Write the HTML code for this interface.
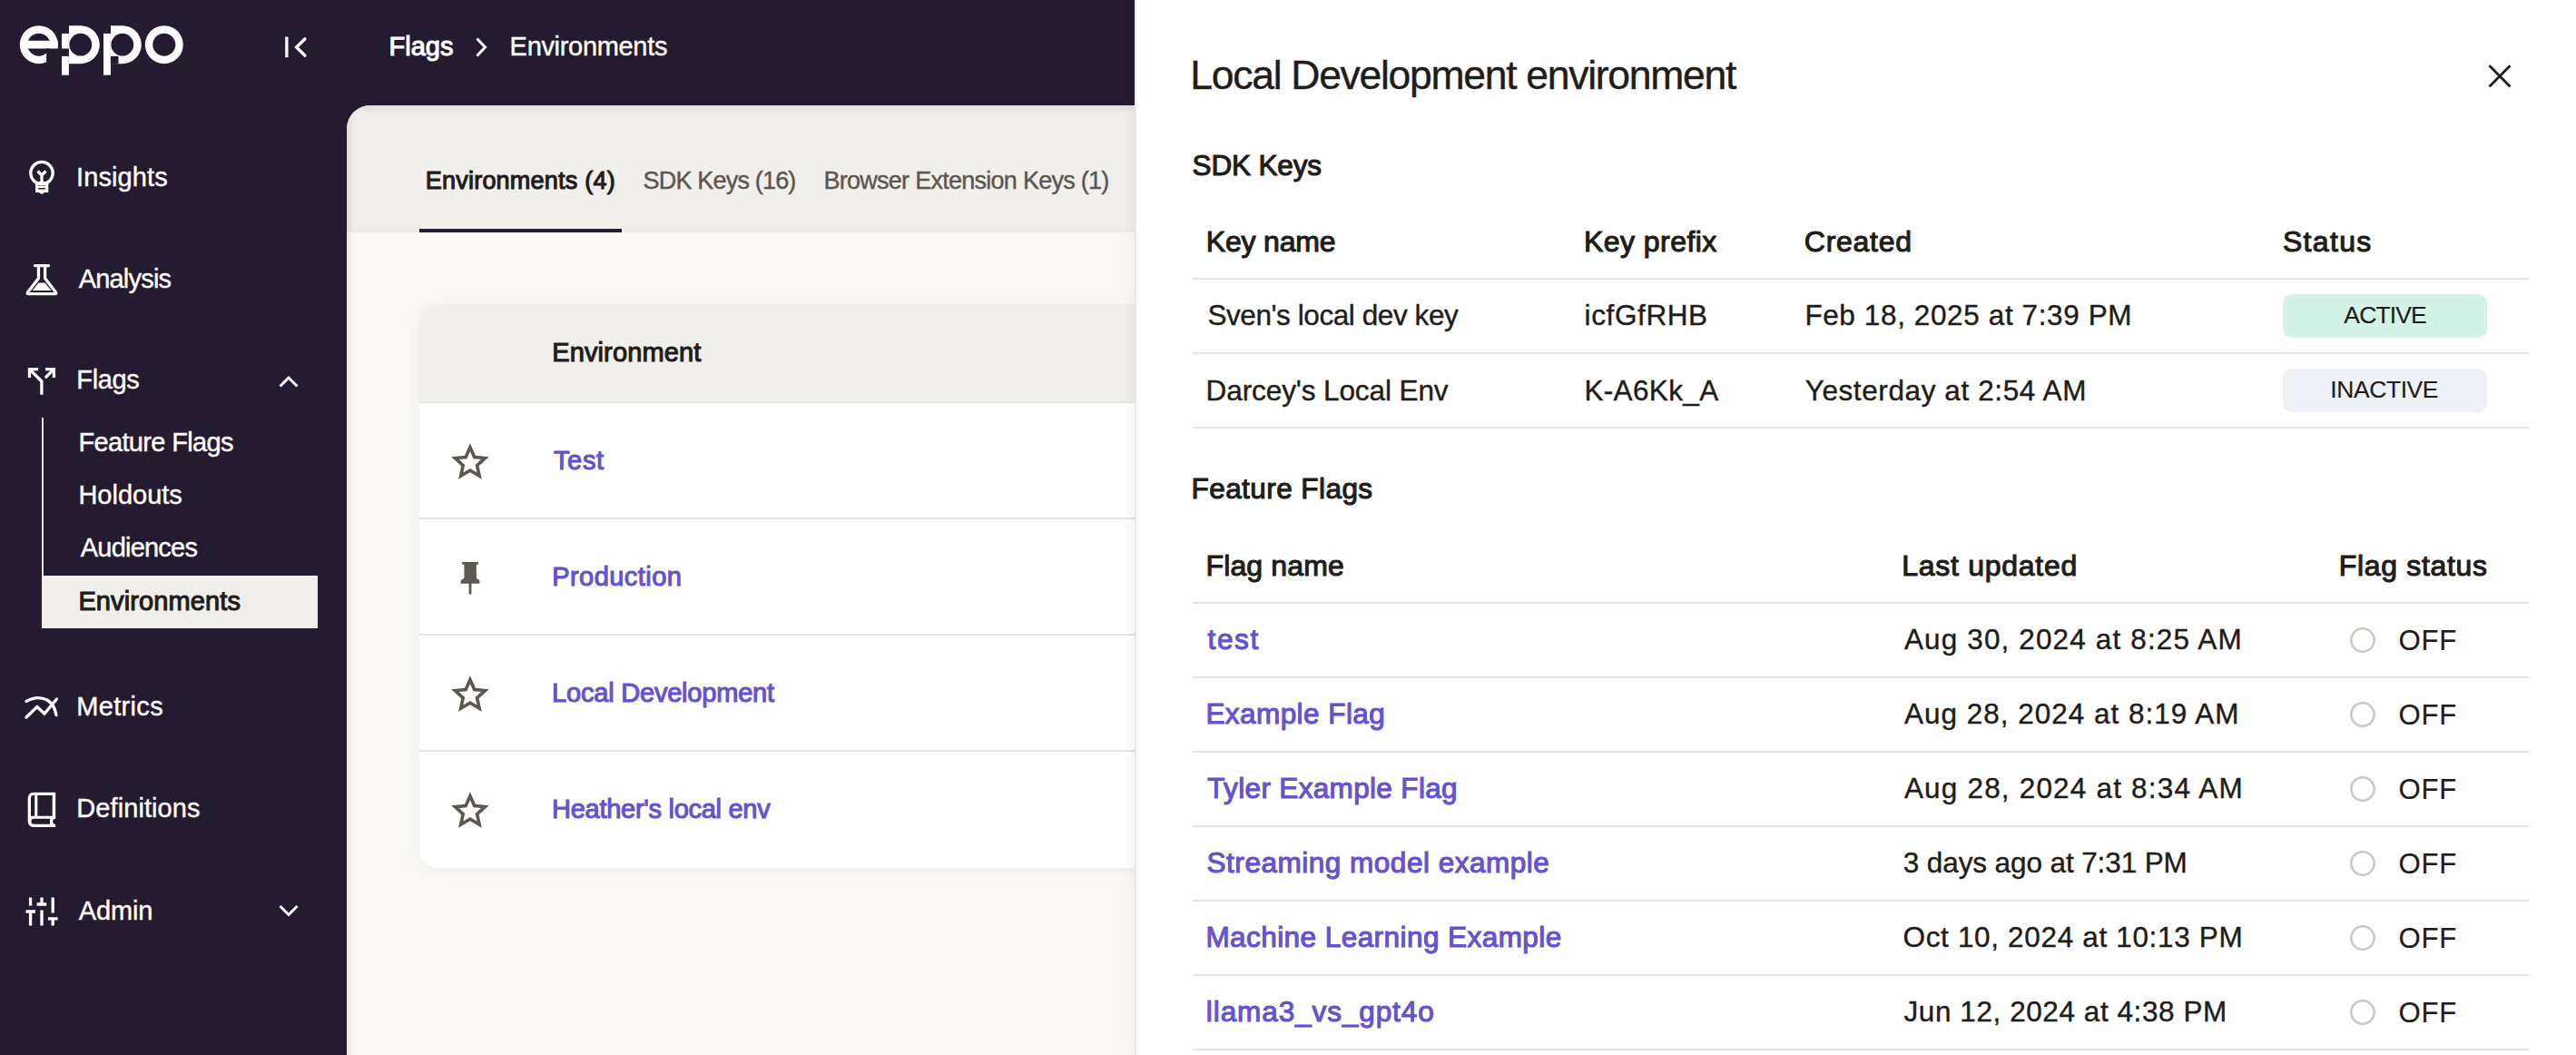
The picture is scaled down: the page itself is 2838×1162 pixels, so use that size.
<!DOCTYPE html>
<html><head><meta charset="utf-8"><title>Eppo - Environments</title>
<style>
html,body{margin:0;padding:0;}
body{width:2838px;height:1162px;overflow:hidden;background:#241b30;position:relative;font-family:"Liberation Sans",sans-serif;}
.t{position:absolute;white-space:nowrap;}
.r{position:absolute;}
</style></head><body>
<div class="r" style="left:382px;top:116px;width:2600px;height:1100px;background:#faf9f5;border-top-left-radius:26px;overflow:hidden;box-shadow:inset 3px 3px 8px rgba(0,0,0,0.10)"><div class="r" style="left:0;top:0;width:2600px;height:140px;background:#f1efeb;box-shadow:inset 3px 3px 8px rgba(0,0,0,0.10)"></div></div>
<div class="r" style="left:462px;top:252px;width:223px;height:4px;background:#241b30;"></div>
<div class="t" style="left:468.77px;top:185.54px;font-size:27px;line-height:27px;color:#1f1d1b;letter-spacing:0.221px;-webkit-text-stroke:1.1px #1f1d1b">Environments (4)</div>
<div class="t" style="left:708.58px;top:185.54px;font-size:27px;line-height:27px;color:#5b5650;letter-spacing:-0.817px;-webkit-text-stroke:0.4px #5b5650">SDK Keys (16)</div>
<div class="t" style="left:907.47px;top:185.54px;font-size:27px;line-height:27px;color:#5b5650;letter-spacing:-0.731px;-webkit-text-stroke:0.4px #5b5650">Browser Extension Keys (1)</div>
<div class="r" style="left:462px;top:335px;width:1200px;height:621px;background:#fff;border-radius:20px;overflow:hidden;box-shadow:0 2px 16px rgba(0,0,0,0.06)"><div class="r" style="left:0;top:0;width:1200px;height:107px;background:#f1efeb"></div><div class="r" style="left:0;top:107px;width:1200px;height:2px;background:#e7e4df"></div><div class="r" style="left:0;top:235px;width:1200px;height:2px;background:#e7e4df"></div><div class="r" style="left:0;top:363px;width:1200px;height:2px;background:#e7e4df"></div><div class="r" style="left:0;top:491px;width:1200px;height:2px;background:#e7e4df"></div></div>
<div class="t" style="left:608.21px;top:373.85px;font-size:29px;line-height:29px;color:#1f1d1b;letter-spacing:0.125px;-webkit-text-stroke:1.1px #1f1d1b">Environment</div>
<div class="t" style="left:609.95px;top:492.75px;font-size:29px;line-height:29px;color:#6652cc;letter-spacing:0.676px;-webkit-text-stroke:1.1px #6652cc">Test</div>
<div class="t" style="left:608.21px;top:620.75px;font-size:29px;line-height:29px;color:#6652cc;letter-spacing:0.443px;-webkit-text-stroke:1.1px #6652cc">Production</div>
<div class="t" style="left:608.11px;top:749.05px;font-size:29px;line-height:29px;color:#6652cc;letter-spacing:-0.208px;-webkit-text-stroke:1.1px #6652cc">Local Development</div>
<div class="t" style="left:608.11px;top:876.95px;font-size:29px;line-height:29px;color:#6652cc;letter-spacing:-0.285px;-webkit-text-stroke:1.1px #6652cc">Heather&#x27;s local env</div>
<svg class="r" style="left:0;top:0" width="1250" height="1162" viewBox="0 0 1250 1162"><path fill="#5c5751" fill-rule="evenodd" d="M517.90,488.30 L523.90,501.85 L538.63,503.36 L527.60,513.25 L530.71,527.74 L517.90,520.30 L505.09,527.74 L508.20,513.25 L497.17,503.36 L511.90,501.85 Z M517.90,497.20 L521.43,505.25 L530.17,506.11 L523.61,511.95 L525.48,520.54 L517.90,516.10 L510.32,520.54 L512.19,511.95 L505.63,506.11 L514.37,505.25 Z"/><path fill="#5c5751" fill-rule="evenodd" d="M517.90,744.30 L523.90,757.85 L538.63,759.36 L527.60,769.25 L530.71,783.74 L517.90,776.30 L505.09,783.74 L508.20,769.25 L497.17,759.36 L511.90,757.85 Z M517.90,753.20 L521.43,761.25 L530.17,762.11 L523.61,767.95 L525.48,776.54 L517.90,772.10 L510.32,776.54 L512.19,767.95 L505.63,762.11 L514.37,761.25 Z"/><path fill="#5c5751" fill-rule="evenodd" d="M517.90,872.30 L523.90,885.85 L538.63,887.36 L527.60,897.25 L530.71,911.74 L517.90,904.30 L505.09,911.74 L508.20,897.25 L497.17,887.36 L511.90,885.85 Z M517.90,881.20 L521.43,889.25 L530.17,890.11 L523.61,895.95 L525.48,904.54 L517.90,900.10 L510.32,904.54 L512.19,895.95 L505.63,890.11 L514.37,889.25 Z"/><path fill="#5c5751" d="M509.1,619 H526.8 V621.8 H524.8 V636.5 L528.4,639.6 V642.7 H519.4 V654 L518,655 L516.6,654 V642.7 H507.6 V639.6 L511.4,636.5 V621.8 H509.1 Z"/></svg>
<div class="t" style="left:428.61px;top:36.85px;font-size:29px;line-height:29px;color:#ffffff;letter-spacing:-0.024px;-webkit-text-stroke:1.1px #ffffff">Flags</div>
<div class="t" style="left:561.61px;top:36.85px;font-size:29px;line-height:29px;color:#ffffff;letter-spacing:-0.321px;-webkit-text-stroke:0.4px #ffffff">Environments</div>
<div class="t" style="left:84.02px;top:180.95px;font-size:29px;line-height:29px;color:#ffffff;letter-spacing:0.103px;-webkit-text-stroke:0.4px #ffffff">Insights</div>
<div class="t" style="left:86.63px;top:293.25px;font-size:29px;line-height:29px;color:#ffffff;letter-spacing:-0.795px;-webkit-text-stroke:0.4px #ffffff">Analysis</div>
<div class="t" style="left:84.31px;top:404.45px;font-size:29px;line-height:29px;color:#ffffff;letter-spacing:-0.349px;-webkit-text-stroke:0.4px #ffffff">Flags</div>
<div class="t" style="left:86.41px;top:473.35px;font-size:29px;line-height:29px;color:#ffffff;letter-spacing:-0.644px;-webkit-text-stroke:0.4px #ffffff">Feature Flags</div>
<div class="t" style="left:86.41px;top:531.45px;font-size:29px;line-height:29px;color:#ffffff;letter-spacing:-0.010px;-webkit-text-stroke:0.4px #ffffff">Holdouts</div>
<div class="t" style="left:88.73px;top:589.45px;font-size:29px;line-height:29px;color:#ffffff;letter-spacing:-0.780px;-webkit-text-stroke:0.4px #ffffff">Audiences</div>
<div class="r" style="left:46px;top:634px;width:304px;height:58px;background:#f1efeb;"></div>
<div class="t" style="left:86.41px;top:647.65px;font-size:29px;line-height:29px;color:#1f1d1b;letter-spacing:0.107px;-webkit-text-stroke:1.1px #1f1d1b">Environments</div>
<div class="r" style="left:46px;top:460px;width:2px;height:174px;background:#e8e6e3;"></div>
<div class="t" style="left:84.31px;top:764.45px;font-size:29px;line-height:29px;color:#ffffff;letter-spacing:0.326px;-webkit-text-stroke:0.4px #ffffff">Metrics</div>
<div class="t" style="left:84.31px;top:876.45px;font-size:29px;line-height:29px;color:#ffffff;letter-spacing:0.078px;-webkit-text-stroke:0.4px #ffffff">Definitions</div>
<div class="t" style="left:86.63px;top:988.75px;font-size:29px;line-height:29px;color:#ffffff;letter-spacing:-0.089px;-webkit-text-stroke:0.4px #ffffff">Admin</div>
<svg class="r" style="left:0;top:0" width="700" height="1162" viewBox="0 0 700 1162"><g fill="#fff"><path fill-rule="evenodd" d="M42.8,28.2 A21,21 0 1,0 42.8,70.2 A21,21 0 1,0 42.8,28.2 Z M42.8,36.7 A12.5,12.5 0 1,1 42.8,61.7 A12.5,12.5 0 1,1 42.8,36.7 Z"/><rect x="30" y="44.8" width="33.8" height="8.7"/><rect x="51.1" y="53.5" width="14" height="18" fill="#241b30"/><path fill-rule="evenodd" d="M75.9,28.2 H88.8 A21,21 0 0,1 88.8,70.2 H75.9 Z M88.8,36.8 A12.4,12.4 0 1,0 88.8,61.6 A12.4,12.4 0 1,0 88.8,36.8 Z"/><rect x="68" y="36.7" width="7.9" height="46"/><rect x="68" y="53.5" width="7.9" height="8.4" fill="#241b30"/><path fill-rule="evenodd" d="M121.9,28.2 H134.8 A21,21 0 0,1 134.8,70.2 H121.9 Z M134.8,36.8 A12.4,12.4 0 1,0 134.8,61.6 A12.4,12.4 0 1,0 134.8,36.8 Z"/><rect x="114" y="36.7" width="7.9" height="46"/><rect x="114" y="28.2" width="7.9" height="8.5" fill="#241b30"/><rect x="121.9" y="61.9" width="8.6" height="8.5" fill="#241b30"/><rect x="68" y="28.2" width="7.9" height="8.5" fill="#241b30"/><path fill-rule="evenodd" d="M180.8,28.2 A21,21 0 1,0 180.8,70.2 A21,21 0 1,0 180.8,28.2 Z M180.8,36.7 A12.5,12.5 0 1,1 180.8,61.7 A12.5,12.5 0 1,1 180.8,36.7 Z"/></g><path fill="none" stroke="#fff" stroke-width="3.3" d="M315.9,40.5 V63.2"/><path fill="none" stroke="#fff" stroke-width="3.3" d="M336,42.8 L326.6,52 L336,61.2" stroke-linecap="round"/><path fill="none" stroke="#fff" stroke-width="3" d="M525.5,42.5 L534.5,52 L525.5,61.5"/><g fill="none" stroke="#fff" stroke-width="3.3"><circle cx="46" cy="190.6" r="12.2"/><path d="M41.5,188.5 L46,193 L50.5,188.5 M46,193 V201"/></g><path fill="#fff" fill-rule="evenodd" d="M39,200 H53.3 V212 H49 L46,214 L43,212 H39 Z M42.2,203.4 H49.9 V204.8 H42.2 Z M42.2,207.1 H49.9 V208.5 H42.2 Z"/><g fill="none" stroke="#fff" stroke-width="3.3" stroke-linejoin="round" stroke-linecap="round"><path d="M38.5,292.6 H53.5"/><path d="M42.5,294 V306.5 L30.5,322 Q29.5,323.6 31.5,323.6 H60.5 Q62.5,323.6 61.5,322 L49.6,306.5 V294"/></g><path fill="#fff" d="M42.4,311.5 H49.5 L56.5,320.1 H35.6 Z"/><g fill="none" stroke="#fff" stroke-width="3.3"><path d="M32.5,415.9 V406.6 H42"/><path d="M32.5,406.6 L45.9,420 V434.8"/><path d="M50.1,406.6 H59.4 V415.9"/><path d="M59.4,406.6 L50.8,415.2" stroke-linecap="round"/></g><path fill="none" stroke="#fff" stroke-width="3" d="M308.5,425.5 L318,416 L327.5,425.5"/><path fill="none" stroke="#fff" stroke-width="3" d="M308.5,998 L318,1007.5 L327.5,998"/><g fill="none" stroke="#fff" stroke-width="3.3" stroke-linecap="round"><path d="M29,772.5 Q41,765.5 52,771 Q60,776 62,787.5"/><path d="M29,790 L40.9,778.5 L48.9,786 L62.5,770"/></g><path fill="#fff" fill-rule="evenodd" d="M36.7,872.8 H61.2 V911.1 H36.7 A6,6 0 0 1 30.7,905.1 V878.8 A6,6 0 0 1 36.7,872.8 Z M37,876 H38.2 V898.8 H34 V879 A3,3 0 0 1 37,876 Z M41.3,876 H57.7 V898.8 H41.3 Z M37.4,901.8 H55 V907.8 H37.4 A3,3 0 0 1 34.4,904.8 A3,3 0 0 1 37.4,901.8 Z"/><circle cx="61.3" cy="904.8" r="3.1" fill="#241b30"/><g fill="none" stroke="#fff" stroke-width="3.3"><path d="M33.6,988.5 V997.5 M33.6,1005.5 V1019.5 M28.5,1004 H39"/><path d="M46,988.5 V994.5 M46,1002.5 V1019.5 M40.6,996 H51.3"/><path d="M58.2,988.5 V1005.5 M58.2,1013.5 V1019.5 M52.9,1011.9 H63.6"/></g></svg>
<div class="r" style="left:1252px;top:0;width:1586px;height:1162px;background:#fff;box-shadow:-6px 0 12px rgba(0,0,0,0.05)"></div>
<div class="r" style="left:1250px;top:0;width:2px;height:1162px;background:#e8e8e7"></div>
<div class="t" style="left:1311.33px;top:61.32px;font-size:44.5px;line-height:44.5px;color:#1f1d1b;letter-spacing:-1.294px;-webkit-text-stroke:0.4px #1f1d1b">Local Development environment</div>
<svg class="r" style="left:2700px;top:40px" width="100" height="100" viewBox="2700 40 100 100"><path fill="none" stroke="#1f1f1f" stroke-width="2.8" d="M2742.5,72.2 L2765.5,95.5 M2765.5,72.2 L2742.5,95.5"/></svg>
<div class="t" style="left:1313.58px;top:166.73px;font-size:31.5px;line-height:31.5px;color:#1f1d1b;letter-spacing:-0.149px;-webkit-text-stroke:1.1px #1f1d1b">SDK Keys</div>
<div class="t" style="left:1328.76px;top:250.31px;font-size:32px;line-height:32px;color:#1f1d1b;letter-spacing:-0.169px;-webkit-text-stroke:1.1px #1f1d1b">Key name</div>
<div class="t" style="left:1745.06px;top:250.31px;font-size:32px;line-height:32px;color:#1f1d1b;letter-spacing:0.447px;-webkit-text-stroke:1.1px #1f1d1b">Key prefix</div>
<div class="t" style="left:1987.80px;top:250.31px;font-size:32px;line-height:32px;color:#1f1d1b;letter-spacing:0.727px;-webkit-text-stroke:1.1px #1f1d1b">Created</div>
<div class="t" style="left:2514.96px;top:250.31px;font-size:32px;line-height:32px;color:#1f1d1b;letter-spacing:1.328px;-webkit-text-stroke:1.1px #1f1d1b">Status</div>
<div class="r" style="left:1314px;top:306px;width:1472px;height:2px;background:#e7e4df;"></div>
<div class="r" style="left:1314px;top:388px;width:1472px;height:2px;background:#e7e4df;"></div>
<div class="r" style="left:1314px;top:470px;width:1472px;height:2px;background:#e7e4df;"></div>
<div class="t" style="left:1330.38px;top:332.13px;font-size:31.5px;line-height:31.5px;color:#1f1d1b;letter-spacing:-0.424px;-webkit-text-stroke:0.4px #1f1d1b">Sven&#x27;s local dev key</div>
<div class="t" style="left:1745.57px;top:332.13px;font-size:31.5px;line-height:31.5px;color:#1f1d1b;letter-spacing:0.615px;-webkit-text-stroke:0.4px #1f1d1b">icfGfRHB</div>
<div class="t" style="left:1988.40px;top:332.13px;font-size:31.5px;line-height:31.5px;color:#1f1d1b;letter-spacing:0.612px;-webkit-text-stroke:0.4px #1f1d1b">Feb 18, 2025 at 7:39 PM</div>
<div class="r" style="left:2515px;top:324px;width:225px;height:48px;background:#d3f2e8;border-radius:10px"></div>
<div class="t" style="left:2582.33px;top:333.86px;font-size:26.5px;line-height:26.5px;color:#1f1d1b;letter-spacing:-0.868px;-webkit-text-stroke:0.15px #1f1d1b">ACTIVE</div>
<div class="t" style="left:1328.60px;top:415.13px;font-size:31.5px;line-height:31.5px;color:#1f1d1b;letter-spacing:-0.096px;-webkit-text-stroke:0.4px #1f1d1b">Darcey&#x27;s Local Env</div>
<div class="t" style="left:1745.40px;top:415.13px;font-size:31.5px;line-height:31.5px;color:#1f1d1b;letter-spacing:0.358px;-webkit-text-stroke:0.4px #1f1d1b">K-A6Kk_A</div>
<div class="t" style="left:1988.69px;top:415.13px;font-size:31.5px;line-height:31.5px;color:#1f1d1b;letter-spacing:0.600px;-webkit-text-stroke:0.4px #1f1d1b">Yesterday at 2:54 AM</div>
<div class="r" style="left:2515px;top:406px;width:225px;height:48px;background:#eef1f5;border-radius:10px"></div>
<div class="t" style="left:2567.35px;top:415.76px;font-size:26.5px;line-height:26.5px;color:#1f1d1b;letter-spacing:-0.436px;-webkit-text-stroke:0.15px #1f1d1b">INACTIVE</div>
<div class="t" style="left:1312.50px;top:523.23px;font-size:31.5px;line-height:31.5px;color:#1f1d1b;letter-spacing:0.437px;-webkit-text-stroke:1.1px #1f1d1b">Feature Flags</div>
<div class="t" style="left:1328.56px;top:607.31px;font-size:32px;line-height:32px;color:#1f1d1b;letter-spacing:0.122px;-webkit-text-stroke:1.1px #1f1d1b">Flag name</div>
<div class="t" style="left:2095.26px;top:607.31px;font-size:32px;line-height:32px;color:#1f1d1b;letter-spacing:0.727px;-webkit-text-stroke:1.1px #1f1d1b">Last updated</div>
<div class="t" style="left:2576.86px;top:607.31px;font-size:32px;line-height:32px;color:#1f1d1b;letter-spacing:0.670px;-webkit-text-stroke:1.1px #1f1d1b">Flag status</div>
<div class="r" style="left:1314px;top:663px;width:1472px;height:2px;background:#e7e4df;"></div>
<div class="r" style="left:1314px;top:745px;width:1472px;height:2px;background:#e7e4df;"></div>
<div class="r" style="left:1314px;top:827px;width:1472px;height:2px;background:#e7e4df;"></div>
<div class="r" style="left:1314px;top:909px;width:1472px;height:2px;background:#e7e4df;"></div>
<div class="r" style="left:1314px;top:991px;width:1472px;height:2px;background:#e7e4df;"></div>
<div class="r" style="left:1314px;top:1073px;width:1472px;height:2px;background:#e7e4df;"></div>
<div class="r" style="left:1314px;top:1155px;width:1472px;height:2px;background:#e7e4df;"></div>
<div class="t" style="left:1330.53px;top:689.33px;font-size:31.5px;line-height:31.5px;color:#6652cc;letter-spacing:1.638px;-webkit-text-stroke:1.1px #6652cc">test</div>
<div class="t" style="left:2097.92px;top:689.33px;font-size:31.5px;line-height:31.5px;color:#1f1d1b;letter-spacing:1.134px;-webkit-text-stroke:0.4px #1f1d1b">Aug 30, 2024 at 8:25 AM</div>
<div class="t" style="left:2642.42px;top:689.58px;font-size:31.2px;line-height:31.2px;color:#1f1d1b;letter-spacing:0.754px;-webkit-text-stroke:0.15px #1f1d1b">OFF</div>
<div class="t" style="left:1328.40px;top:771.33px;font-size:31.5px;line-height:31.5px;color:#6652cc;letter-spacing:0.439px;-webkit-text-stroke:1.1px #6652cc">Example Flag</div>
<div class="t" style="left:2097.92px;top:771.33px;font-size:31.5px;line-height:31.5px;color:#1f1d1b;letter-spacing:0.997px;-webkit-text-stroke:0.4px #1f1d1b">Aug 28, 2024 at 8:19 AM</div>
<div class="t" style="left:2642.42px;top:771.58px;font-size:31.2px;line-height:31.2px;color:#1f1d1b;letter-spacing:0.754px;-webkit-text-stroke:0.15px #1f1d1b">OFF</div>
<div class="t" style="left:1330.29px;top:853.33px;font-size:31.5px;line-height:31.5px;color:#6652cc;letter-spacing:0.336px;-webkit-text-stroke:1.1px #6652cc">Tyler Example Flag</div>
<div class="t" style="left:2097.92px;top:853.33px;font-size:31.5px;line-height:31.5px;color:#1f1d1b;letter-spacing:1.184px;-webkit-text-stroke:0.4px #1f1d1b">Aug 28, 2024 at 8:34 AM</div>
<div class="t" style="left:2642.42px;top:853.58px;font-size:31.2px;line-height:31.2px;color:#1f1d1b;letter-spacing:0.754px;-webkit-text-stroke:0.15px #1f1d1b">OFF</div>
<div class="t" style="left:1329.58px;top:935.33px;font-size:31.5px;line-height:31.5px;color:#6652cc;letter-spacing:0.517px;-webkit-text-stroke:1.1px #6652cc">Streaming model example</div>
<div class="t" style="left:2096.82px;top:935.33px;font-size:31.5px;line-height:31.5px;color:#1f1d1b;letter-spacing:-0.109px;-webkit-text-stroke:0.4px #1f1d1b">3 days ago at 7:31 PM</div>
<div class="t" style="left:2642.42px;top:935.58px;font-size:31.2px;line-height:31.2px;color:#1f1d1b;letter-spacing:0.754px;-webkit-text-stroke:0.15px #1f1d1b">OFF</div>
<div class="t" style="left:1328.40px;top:1017.33px;font-size:31.5px;line-height:31.5px;color:#6652cc;letter-spacing:0.441px;-webkit-text-stroke:1.1px #6652cc">Machine Learning Example</div>
<div class="t" style="left:2096.50px;top:1017.33px;font-size:31.5px;line-height:31.5px;color:#1f1d1b;letter-spacing:0.663px;-webkit-text-stroke:0.4px #1f1d1b">Oct 10, 2024 at 10:13 PM</div>
<div class="t" style="left:2642.42px;top:1017.58px;font-size:31.2px;line-height:31.2px;color:#1f1d1b;letter-spacing:0.754px;-webkit-text-stroke:0.15px #1f1d1b">OFF</div>
<div class="t" style="left:1328.87px;top:1099.33px;font-size:31.5px;line-height:31.5px;color:#6652cc;letter-spacing:0.903px;-webkit-text-stroke:1.1px #6652cc">llama3_vs_gpt4o</div>
<div class="t" style="left:2097.53px;top:1099.33px;font-size:31.5px;line-height:31.5px;color:#1f1d1b;letter-spacing:0.568px;-webkit-text-stroke:0.4px #1f1d1b">Jun 12, 2024 at 4:38 PM</div>
<div class="t" style="left:2642.42px;top:1099.58px;font-size:31.2px;line-height:31.2px;color:#1f1d1b;letter-spacing:0.754px;-webkit-text-stroke:0.15px #1f1d1b">OFF</div>
<svg class="r" style="left:2500px;top:600px" width="200" height="562" viewBox="2500 600 200 562"><circle cx="2603" cy="705" r="12.7" fill="none" stroke="#cdc9c3" stroke-width="2.6"/><circle cx="2603" cy="787" r="12.7" fill="none" stroke="#cdc9c3" stroke-width="2.6"/><circle cx="2603" cy="869" r="12.7" fill="none" stroke="#cdc9c3" stroke-width="2.6"/><circle cx="2603" cy="951" r="12.7" fill="none" stroke="#cdc9c3" stroke-width="2.6"/><circle cx="2603" cy="1033" r="12.7" fill="none" stroke="#cdc9c3" stroke-width="2.6"/><circle cx="2603" cy="1115" r="12.7" fill="none" stroke="#cdc9c3" stroke-width="2.6"/></svg>
</body></html>
